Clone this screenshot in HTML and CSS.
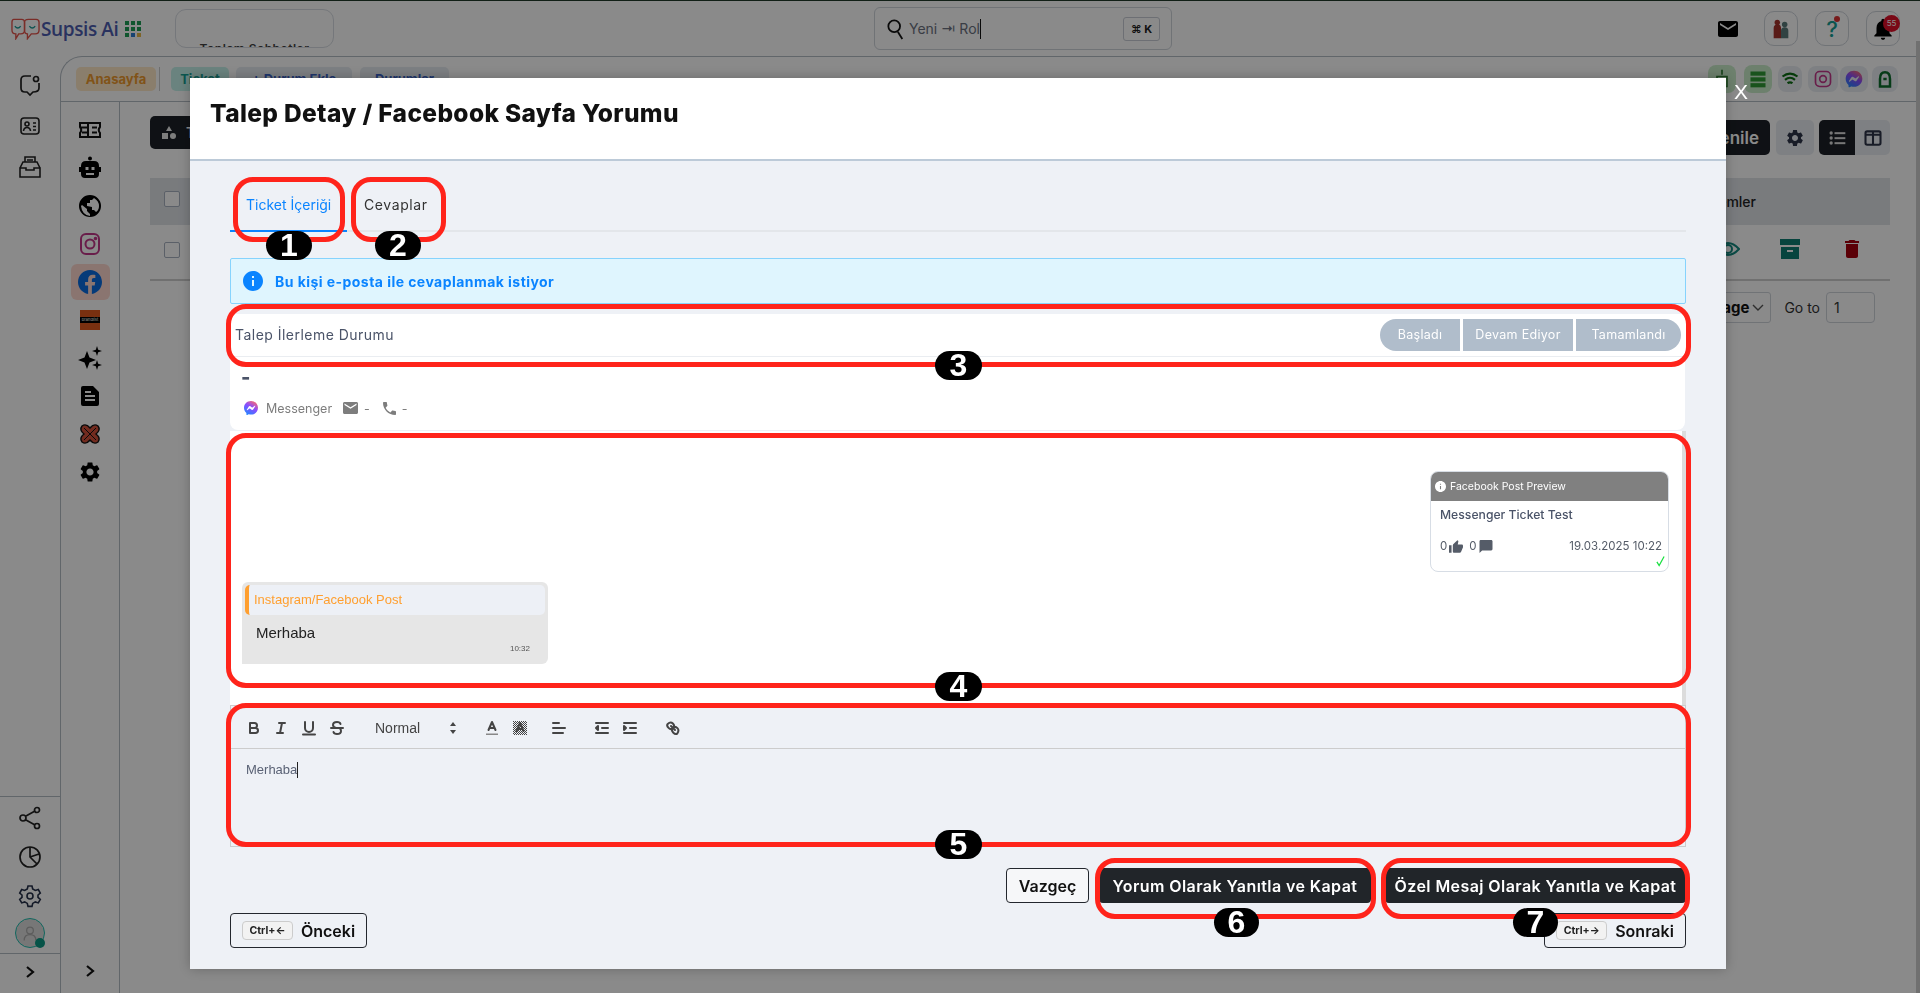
FILE: index.html
```html
<!DOCTYPE html>
<html lang="tr">
<head>
<meta charset="utf-8">
<title>Supsis Ai</title>
<link rel="stylesheet" href="styles.css">
</head>
<body>
<svg class="defs" width="0" height="0"><defs>
<linearGradient id="msg" x1="0.2" y1="1" x2="0.8" y2="0"><stop offset="0" stop-color="#1e88ff"/><stop offset="0.55" stop-color="#8a4dff"/><stop offset="1" stop-color="#ff6a6a"/></linearGradient>
<pattern id="dots" width="2" height="2" patternUnits="userSpaceOnUse"><rect width="1" height="1" fill="#444"/><rect x="1" y="1" width="1" height="1" fill="#444"/></pattern>
</defs></svg>
<div class="page">
  <div class="app">
    <header class="topbar">
      <div class="logo">
        <svg class="logo-mark" viewBox="0 0 30 22" fill="none" stroke="#e2534b" stroke-width="1.4"><path d="M3 1h8q3 0 3 3v8q0 4-4 4H8l-3 5v-5q-4 0-4-4V4q0-3 2-3z"/><path d="M18 1h8q3 0 3 3v8q0 4-4 4h-4l-4 5v-5q-3 0-3-4V4q0-3 4-3z"/><path d="M4 8q3 4 6 0M19 8q3 4 6 0" stroke="#1c9c96"/></svg>
        <span class="logo-text">Supsis Ai</span>
      </div>
      <svg class="apps" viewBox="0 0 16 16"><g fill="#1f9d55"><rect width="4" height="4"/><rect x="6" width="4" height="4"/><rect x="12" width="4" height="4"/><rect y="6" width="4" height="4"/><rect x="6" y="6" width="4" height="4"/><rect x="12" y="6" width="4" height="4"/><rect y="12" width="4" height="4"/></g><rect x="6" y="12" width="4" height="4" fill="#2d7dd2"/><rect x="12" y="12" width="4" height="4" fill="#e9b949"/></svg>
      <div class="stat-card"><span>Toplam Sohbetler</span></div>
      <div class="search">
        <svg class="search-icon" viewBox="0 0 20 24" fill="none" stroke="#111" stroke-width="2"><circle cx="8" cy="9" r="6.5"/><path d="M12 15l5 8"/></svg>
        <span class="search-text">Yeni ⇥ Rol</span><span class="caret"></span>
        <span class="search-kbd">⌘ K</span>
      </div>
      <div class="top-actions">
        <svg class="mail" viewBox="2 4 20 16"><path d="M20 4H4c-1.1 0-2 .9-2 2v12c0 1.1.9 2 2 2h16c1.1 0 2-.9 2-2V6c0-1.1-.9-2-2-2zm0 4l-8 5-8-5V6l8 5 8-5v2z"/></svg>
        <div class="top-btn"><svg class="ico22" viewBox="0 0 24 24"><path fill="#a5322c" d="M4 22V11q0-4 4-4t4 4v11z"/><circle cx="8" cy="5" r="3" fill="#a5322c"/><path fill="#5a7a7a" d="M12 22v-8q0-4 4-4t4 4v8z"/><circle cx="16" cy="7" r="3" fill="#5a7a7a"/></svg></div>
        <div class="top-btn top-help"><span class="help">?</span><span class="help-dot"></span></div>
        <div class="top-btn"><svg class="ico26" viewBox="0 0 24 24"><path d="M12 22c1.1 0 2-.9 2-2h-4c0 1.1.9 2 2 2zm6-6v-5c0-3.07-1.64-5.64-4.5-6.32V4c0-.83-.67-1.5-1.5-1.5s-1.5.67-1.5 1.5v.68C7.63 5.36 6 7.92 6 11v5l-2 2v1h16v-1l-2-2z"/></svg><span class="bell-badge">55</span></div>
      </div>
    </header>
    <div class="shell">
      <nav class="rail">
        <div class="rail-top">
          <svg class="rail-ico" viewBox="0 0 24 24" fill="none" stroke="#222" stroke-width="1.7"><path d="M13 3H7q-4 0-4 4v8q0 4 4 4h2l3 3 3-3q6 0 6-4v-5"/><circle cx="18" cy="6" r="2.5"/></svg>
          <svg class="rail-ico" viewBox="0 0 24 24" fill="none" stroke="#222" stroke-width="1.6"><rect x="3" y="4" width="18" height="16" rx="3"/><circle cx="9" cy="10" r="2"/><path d="M5.500 17q.5-3.500 3.500-3.500t3.500 3.500M15 9h3M15 12.500h3M15 16h3"/></svg>
          <svg class="rail-ico" viewBox="0 0 24 24" fill="none" stroke="#222" stroke-width="1.6"><path d="M2 13h6v2h8v-2h6v9H2zM2 13l3-6h14l3 6M7 7V2h10v5M9 5h6"/></svg>
        </div>
        <div class="rail-bottom">
          <svg class="rail-ico" viewBox="0 0 24 24" fill="none" stroke="#222" stroke-width="1.7"><circle cx="5" cy="12" r="3"/><circle cx="19" cy="4" r="2.500"/><circle cx="19" cy="20" r="2.500"/><path d="M8 10l9-5M8 14l9 5"/></svg>
          <svg class="rail-ico" viewBox="0 0 24 24" fill="none" stroke="#222" stroke-width="1.7"><circle cx="12" cy="12" r="10"/><path d="M12 2v10l7 7M12 12l9-3"/></svg>
          <svg class="rail-ico" viewBox="0 0 24 24" fill="none" stroke="#26304a" stroke-width="1.6"><path d="M10 2h4l.7 3 2.600 1.500 3-1 2 3.500-2.300 2v2.400l2.300 2-2 3.500-3-1-2.600 1.500-.7 3h-4l-.7-3-2.600-1.500-3 1-2-3.500 2.300-2v-2.400l-2.300-2 2-3.500 3 1L9.300 5z"/><circle cx="12" cy="12" r="3"/></svg>
          <div class="avatar"><svg viewBox="0 0 24 24" fill="none" stroke="#aaa" stroke-width="1.500"><circle cx="12" cy="9" r="4"/><path d="M5 21q0-7 7-7t7 7"/></svg><span class="avatar-dot"></span></div>
          <div class="rail-foot"><svg class="chev" viewBox="0 0 10 14" fill="none" stroke="#111" stroke-width="2.200"><path d="M2 2l6 5-6 5"/></svg></div>
        </div>
      </nav>
      <div class="panel">
        <div class="strip">
          <span class="chip chip-home">Anasayfa</span><span class="strip-sep"></span>
          <span class="chip chip-ticket">Ticket</span>
          <span class="chip chip-add">+ Durum Ekle</span>
          <span class="chip chip-status">Durumlar</span>
          <div class="strip-icons">
            <span class="sq sq-green"><svg viewBox="0 0 24 24" fill="none" stroke="#2f7d32" stroke-width="2"><path d="M12 1v6M6 9h12v12H6z"/></svg></span>
            <span class="sq sq-green sq-list"><svg viewBox="0 0 24 24" fill="#2f9a34"><rect x="3" y="3" width="18" height="5"/><rect x="3" y="10" width="18" height="5"/><rect x="3" y="17" width="18" height="5"/></svg></span>
            <span class="sq sq-wifi"><svg viewBox="0 0 24 24" fill="none" stroke="#0c6e14" stroke-width="2.600"><path d="M3 9q9-7 18 0M6 13q6-5 12 0M9 17q3-2 6 0"/></svg></span>
            <span class="sq sq-ig"><svg viewBox="0 0 24 24" fill="none" stroke="#c2378a" stroke-width="2"><rect x="3" y="3" width="18" height="18" rx="5"/><circle cx="12" cy="12" r="4"/></svg></span>
            <span class="sq sq-ms"><svg viewBox="0 0 24 24" fill="url(#msg)"><path fill-rule="evenodd" d="M12 2C6.360 2 2 6.130 2 11.700c0 2.910 1.190 5.440 3.140 7.170.16.14.26.35.27.57l.05 1.780c.02.57.6.94 1.120.71l1.980-.87c.17-.08.36-.09.53-.05.91.25 1.880.39 2.910.39 5.640 0 10-4.130 10-9.700S17.640 2 12 2zm6 7.460l-2.940 4.660c-.47.74-1.470.93-2.170.4l-2.340-1.750a.6.6 0 00-.72 0l-3.160 2.400c-.42.32-.97-.18-.69-.63l2.940-4.660c.47-.74 1.470-.93 2.170-.4l2.340 1.750c.21.16.51.16.72 0l3.160-2.400c.42-.32.97.18.69.63z"/></svg></span>
            <span class="sq sq-last"><svg viewBox="0 0 24 24" fill="none" stroke="#0c6e2c" stroke-width="3"><path d="M6 21v-9q0-8 6-8t6 8v9zM10 12h4"/></svg></span>
          </div>
        </div>
        <div class="work">
          <aside class="subrail">
            <svg class="sub-ico" viewBox="0 0 24 24" fill="none" stroke="#111" stroke-width="2"><path d="M2 5h20v4q-2.500 3 0 6v4H2v-4q2.500-3 0-6zM2 9.500h8M4 14.500h6M10 5v14M14 9.500h5M14 14.500h5"/></svg>
            <svg class="sub-ico" viewBox="0 0 24 24"><circle cx="12" cy="2.500" r="2"/><path fill-rule="evenodd" d="M8 5h8q5 0 5 5v1h2v5h-2v2q0 4-4 4H7q-4 0-4-4v-2H1v-5h2v-1q0-5 5-5zm-.5 6v3h3v-3zm6 0v3h3v-3zM8 17v2h8v-2z"/></svg>
            <svg class="sub-ico" viewBox="0 0 24 24"><path fill-rule="evenodd" d="M12 1a11 11 0 100 22 11 11 0 000-22zM4 11l5 4v2l3 3v2Q4 21 3 12zm14 7l-2-2h-2v-3l-5-1V9h3V6h2l2-2q5 3 5 8 0 4-3 6z"/></svg>
            <svg class="sub-ico ig" viewBox="0 0 24 24" fill="none" stroke="#c2378a" stroke-width="2"><rect x="3" y="2" width="18" height="20" rx="5"/><circle cx="12" cy="12" r="4.500"/><circle cx="17.500" cy="6.500" r=".8" fill="#c2378a"/></svg>
            <div class="sub-active"><svg class="sub-ico" viewBox="0 0 24 24"><path fill="#0b6ce0" d="M24 12.070C24 5.410 18.630 0 12 0S0 5.410 0 12.070c0 6.020 4.390 11.010 10.130 11.930v-8.440H7.080v-3.490h3.050V9.410c0-3.020 1.790-4.690 4.530-4.690 1.310 0 2.680.24 2.680.24v2.970h-1.510c-1.490 0-1.960.93-1.960 1.870v2.260h3.330l-.53 3.490h-2.800V24C19.610 23.080 24 18.090 24 12.070z"/></svg></div>
            <div class="brand"><span>brandlist</span></div>
            <svg class="sub-ico" viewBox="0 0 24 24"><path d="M9 5l2.500 6.500L18 14l-6.500 2.500L9 23l-2.500-6.500L0 14l6.500-2.500zM19 0l1.200 3.800L24 5l-3.800 1.200L19 10l-1.200-3.800L14 5l3.800-1.200zM19 14l1.200 3.800L24 19l-3.800 1.200L19 24l-1.200-3.800L14 19l3.800-1.200z"/></svg>
            <svg class="sub-ico" viewBox="0 0 24 24"><path fill-rule="evenodd" d="M5 2h10l6 6v12q0 2-2 2H5q-2 0-2-2V4q0-2 2-2zm2 9v2h10v-2zm0 4v2h10v-2zm0-8v2h6V7z"/></svg>
            <svg class="sub-ico" viewBox="0 0 24 24" fill="none" stroke-width="1.400"><path fill="#d2503a" stroke="#111" d="M4 4q4-3 8 2 4-5 8-2 3 4-2 8 5 4 2 8-4 3-8-2-4 5-8 2-3-4 2-8-5-4-2-8z"/><path stroke="#111" d="M6 18L18 6M6 6l12 12" stroke-width="1"/></svg>
            <svg class="sub-ico" viewBox="0 0 24 24"><path d="M19.140 12.940c.04-.3.06-.61.06-.94 0-.32-.02-.64-.07-.94l2.030-1.580c.18-.14.23-.41.12-.61l-1.920-3.320c-.12-.22-.37-.29-.59-.22l-2.390.96c-.5-.38-1.030-.7-1.620-.94l-.36-2.540c-.04-.24-.24-.41-.48-.41h-3.840c-.24 0-.43.17-.47.41l-.36 2.540c-.59.24-1.130.57-1.620.94l-2.390-.96c-.22-.08-.47 0-.59.22L2.740 8.870c-.12.21-.08.47.12.61l2.030 1.580c-.05.3-.09.63-.09.94s.02.64.07.94l-2.030 1.580c-.18.14-.23.41-.12.61l1.920 3.320c.12.22.37.29.59.22l2.390-.96c.5.38 1.030.7 1.620.94l.36 2.540c.05.24.24.41.48.41h3.840c.24 0 .44-.17.47-.41l.36-2.540c.59-.24 1.130-.56 1.620-.94l2.390.96c.22.08.47 0 .59-.22l1.920-3.320c.12-.22.07-.47-.12-.61l-2.010-1.580zM12 15.600c-1.980 0-3.600-1.620-3.600-3.600s1.620-3.600 3.600-3.600 3.600 1.620 3.600 3.600-1.620 3.600-3.600 3.600z"/></svg>
            <div class="subrail-foot"><svg class="chev" viewBox="0 0 10 14" fill="none" stroke="#111" stroke-width="2.200"><path d="M2 2l6 5-6 5"/></svg></div>
          </aside>
          <main class="main">
            <div class="toolbar">
              <button class="btn-dark btn-left"><svg viewBox="0 0 14 14" fill="#e8e8e8"><path d="M7 0l3 5H4z"/><rect x="0" y="7" width="6" height="6"/><circle cx="11" cy="10" r="3"/></svg><span>Toplu İşlem</span></button>
              <div class="toolbar-right">
                <button class="btn-dark btn-refresh">Yenile</button>
                <span class="tool-sq"><svg viewBox="0 0 24 24" fill="#2e3448"><path d="M19.140 12.940c.04-.3.06-.61.06-.94 0-.32-.02-.64-.07-.94l2.030-1.580c.18-.14.23-.41.12-.61l-1.920-3.320c-.12-.22-.37-.29-.59-.22l-2.390.96c-.5-.38-1.030-.7-1.620-.94l-.36-2.540c-.04-.24-.24-.41-.48-.41h-3.840c-.24 0-.43.17-.47.41l-.36 2.540c-.59.24-1.130.57-1.620.94l-2.390-.96c-.22-.08-.47 0-.59.22L2.740 8.870c-.12.21-.08.47.12.61l2.030 1.580c-.05.3-.09.63-.09.94s.02.64.07.94l-2.030 1.580c-.18.14-.23.41-.12.61l1.920 3.320c.12.22.37.29.59.22l2.390-.96c.5.38 1.030.7 1.620.94l.36 2.540c.05.24.24.41.48.41h3.840c.24 0 .44-.17.47-.41l.36-2.540c.59-.24 1.130-.56 1.620-.94l2.390.96c.22.08.47 0 .59-.22l1.920-3.320c.12-.22.07-.47-.12-.61l-2.010-1.580zM12 15.600c-1.980 0-3.600-1.620-3.600-3.600s1.620-3.600 3.600-3.600 3.600 1.620 3.600 3.600-1.620 3.600-3.600 3.600z"/></svg></span>
                <div class="view-toggle">
                  <span class="view-on"><svg viewBox="0 0 24 24" fill="#ddd"><circle cx="5" cy="6" r="2"/><circle cx="5" cy="12" r="2"/><circle cx="5" cy="18" r="2"/><rect x="9" y="5" width="13" height="2.400"/><rect x="9" y="11" width="13" height="2.400"/><rect x="9" y="17" width="13" height="2.400"/></svg></span>
                  <span class="view-off"><svg viewBox="0 0 24 24" fill="none" stroke="#2e3448" stroke-width="2.500"><rect x="3" y="4" width="18" height="16" rx="2"/><path d="M12 4v16M3 8h18"/></svg></span>
                </div>
              </div>
            </div>
            <div class="table">
              <div class="t-head"><span class="check"></span><span class="t-actions-title">İşlemler</span></div>
              <div class="t-row"><span class="check"></span>
                <div class="t-actions">
                  <svg class="act" viewBox="0 0 24 24" fill="none" stroke="#138a80" stroke-width="2"><path d="M1 12q11-12 22 0-11 12-22 0z"/><circle cx="12" cy="12" r="4"/></svg>
                  <svg class="act" viewBox="0 0 24 24" fill="#0d7f73"><path fill-rule="evenodd" d="M2 2h20v6H2zm1 8h18v12H3zm6 3v2h6v-2z"/></svg>
                  <svg class="act" viewBox="0 0 24 24" fill="#a8000e"><path d="M6 19c0 1.100.9 2 2 2h8c1.100 0 2-.9 2-2V7H6v12zM19 4h-3.500l-1-1h-5l-1 1H5v2h14V4z"/></svg>
                </div>
              </div>
            </div>
            <div class="pager"><span class="pager-select">10 / page<svg viewBox="0 0 12 8" fill="none" stroke="#555" stroke-width="1.400"><path d="M1 1l5 5 5-5"/></svg></span><span class="pager-go">Go to</span><span class="pager-input">1</span></div>
          </main>
        </div>
      </div>
    </div>
  </div>
  <div class="pagebar"></div>
</div>

<div class="overlay"></div>

<section class="modal">
  <header class="modal-head"><h1>Talep Detay / Facebook Sayfa Yorumu</h1></header>
  <div class="modal-body">
    <div class="tabs"><span class="tab tab-on">Ticket İçeriği</span><span class="tab tab-two">Cevaplar</span></div>
    <div class="alert">
      <svg viewBox="2 2 20 20" fill="#0a84ff"><path d="M12 2C6.480 2 2 6.480 2 12s4.480 10 10 10 10-4.480 10-10S17.520 2 12 2zm1 15h-2v-6h2v6zm0-8h-2V7h2v2z"/></svg>
      <span>Bu kişi e-posta ile cevaplanmak istiyor</span>
    </div>
    <div class="progress">
      <span class="progress-label">Talep İlerleme Durumu</span>
      <div class="steps"><span class="step step-a">Başladı</span><span class="step step-b">Devam Ediyor</span><span class="step step-c">Tamamlandı</span></div>
    </div>
    <div class="contact">
      <div class="contact-name">-</div>
      <div class="contact-meta">
        <svg class="c-msg" viewBox="2 2 20 20" fill="url(#msg)"><path fill-rule="evenodd" d="M12 2C6.360 2 2 6.130 2 11.700c0 2.910 1.190 5.440 3.140 7.170.16.14.26.35.27.57l.05 1.780c.02.57.6.94 1.120.71l1.980-.87c.17-.08.36-.09.53-.05.91.25 1.880.39 2.910.39 5.640 0 10-4.130 10-9.700S17.640 2 12 2zm6 7.460l-2.940 4.660c-.47.74-1.470.93-2.170.4l-2.340-1.750a.6.6 0 00-.72 0l-3.160 2.400c-.42.32-.97-.18-.69-.63l2.940-4.660c.47-.74 1.470-.93 2.170-.4l2.340 1.750c.21.16.51.16.72 0l3.160-2.400c.42-.32.97.18.69.63z"/></svg>
        <span class="c-name">Messenger</span>
        <svg class="c-mail" viewBox="2 4 20 16" fill="#7d7d7d"><path d="M20 4H4c-1.100 0-2 .9-2 2v12c0 1.100.9 2 2 2h16c1.100 0 2-.9 2-2V6c0-1.100-.9-2-2-2zm0 4l-8 5-8-5V6l8 5 8-5v2z"/></svg>
        <span class="c-dash">-</span>
        <svg class="c-phone" viewBox="3 3 18 18" fill="#7d7d7d"><path d="M6.620 10.790c1.440 2.830 3.760 5.140 6.590 6.590l2.200-2.200c.27-.27.67-.36 1.020-.24 1.120.37 2.330.57 3.570.57.55 0 1 .45 1 1V20c0 .55-.45 1-1 1-9.390 0-17-7.610-17-17 0-.55.45-1 1-1h3.500c.55 0 1 .45 1 1 0 1.250.2 2.450.57 3.570.11.35.03.74-.25 1.020l-2.200 2.200z"/></svg>
        <span class="c-dash">-</span>
      </div>
    </div>
    <div class="chat">
      <article class="post">
        <div class="post-head"><svg viewBox="2 2 20 20" fill="#fff"><path d="M12 2C6.480 2 2 6.480 2 12s4.480 10 10 10 10-4.480 10-10S17.520 2 12 2zm1 15h-2v-6h2v6zm0-8h-2V7h2v2z"/></svg><span>Facebook Post Preview</span></div>
        <div class="post-title">Messenger Ticket Test</div>
        <div class="post-foot">
          <span class="post-count">0</span><svg viewBox="1 1 22 20" fill="#555c68"><path d="M1 21h4V9H1v12zm22-11c0-1.100-.9-2-2-2h-6.310l.95-4.570.03-.32c0-.41-.17-.79-.44-1.060L14.170 1 7.590 7.590C7.220 7.950 7 8.450 7 9v10c0 1.100.9 2 2 2h9c.83 0 1.540-.5 1.840-1.220l3.020-7.050c.09-.23.14-.47.14-.73v-2z"/></svg>
          <span class="post-count post-count-2">0</span><svg viewBox="2 2 20 20" fill="#555c68"><path d="M20 2H4c-1.100 0-2 .9-2 2v18l4-4h14c1.100 0 2-.9 2-2V4c0-1.100-.9-2-2-2z"/></svg>
          <span class="post-date">19.03.2025 10:22</span>
          <svg class="post-check" viewBox="0 0 10 12" fill="none" stroke="#18e040" stroke-width="1.400"><path d="M1 7l2.500 4L9 1"/></svg>
        </div>
      </article>
      <article class="bubble">
        <div class="quote">Instagram/Facebook Post</div>
        <div class="bubble-text">Merhaba</div>
        <div class="bubble-time">10:32</div>
      </article>
    </div>
    <div class="editor">
      <div class="ql-bar">
        <svg class="q q-b" viewBox="0 0 18 18"><path d="M5 4h4.500a2.500 2.500 0 010 5H5zM5 9h5.500a2.500 2.500 0 010 5H5z"/></svg>
        <svg class="q q-i" viewBox="0 0 18 18"><path d="M7 4h6M5 14h6M8 14l2-10"/></svg>
        <svg class="q q-u" viewBox="0 0 18 18"><path d="M5 3v6a4 4 0 008 0V3M3 15.500h12"/></svg>
        <svg class="q q-s" viewBox="0 0 18 18"><path d="M3 9h12M12.500 5q-.5-2-3.500-2-4 0-4 3 0 2 3 3M5.500 13q.5 2 3.500 2 4 0 4-3 0-1.500-1-2.500"/></svg>
        <span class="q-font">Normal</span>
        <svg class="q-arrows" viewBox="0 0 8 14" fill="#444"><path d="M4 1l3 4H1zM4 13l3-4H1z"/></svg>
        <svg class="q q-color" viewBox="0 0 18 18"><path d="M5.500 11L9 3l3.500 8M6.400 9h5.200"/><rect x="3" y="14.500" width="12" height="1.500" fill="#888" stroke="none"/></svg>
        <svg class="q q-bg" viewBox="0 0 18 18"><rect x="2" y="2" width="14" height="14" fill="url(#dots)" stroke="none"/><path d="M5.500 12L9 4l3.500 8M6.400 10h5.200"/></svg>
        <svg class="q q-align" viewBox="0 0 18 18"><path d="M3 4h6M3 9h12M3 14h10"/></svg>
        <svg class="q q-out" viewBox="0 0 18 18"><path d="M3 4h12M3 14h12M9 9h6"/><path d="M5 7v4L3 9z" fill="#444"/></svg>
        <svg class="q q-in" viewBox="0 0 18 18"><path d="M3 4h12M3 14h12M9 9h6"/><path d="M3 7v4l2-2z" fill="#444"/></svg>
        <svg class="q q-link" viewBox="0 0 18 18"><path d="M7 7l4 4M8.900 4.577a3.476 3.476 0 01.36 4.679A3.476 3.476 0 014.577 8.900C3.185 7.500 2.350 6.458 3.683 4.900 5.500 3.300 7.350 3.100 8.900 4.577zM13.423 9.100a3.476 3.476 0 00-4.679-.36 3.476 3.476 0 00.36 4.679c1.392 1.392 2.500 2.208 4.100 1.167C14.700 12.500 14.900 10.650 13.423 9.100z"/></svg>
      </div>
      <div class="ql-text">Merhaba<span class="ql-caret"></span></div>
    </div>
    <div class="actions">
      <button class="btn-line btn-cancel">Vazgeç</button>
      <button class="btn-solid btn-comment">Yorum Olarak Yanıtla ve Kapat</button>
      <button class="btn-solid btn-private">Özel Mesaj Olarak Yanıtla ve Kapat</button>
    </div>
    <div class="nav-row">
      <button class="btn-line btn-prev"><kbd>Ctrl+←</kbd>Önceki</button>
      <button class="btn-line btn-next"><kbd>Ctrl+→</kbd>Sonraki</button>
    </div>
  </div>
</section>
<span class="modal-close">X</span>

<div class="notes">
  <span class="box box-1"></span><span class="box box-2"></span><span class="box box-3"></span><span class="box box-4"></span><span class="box box-5"></span><span class="box box-6"></span><span class="box box-7"></span>
  <span class="pill pill-1">1</span><span class="pill pill-2">2</span><span class="pill pill-3">3</span><span class="pill pill-4">4</span><span class="pill pill-5">5</span><span class="pill pill-6">6</span><span class="pill pill-7">7</span>
</div>
</body>
</html>
```
FILE: styles.css
```css
* { box-sizing: border-box; }
html, body { margin: 0; height: 100%; overflow: hidden; }
body { font-family: Inter, "Noto Sans", "Liberation Sans", sans-serif; color: #222; background: #fff; }
button { font: inherit; cursor: pointer; }
.defs { position: absolute; }

.page { display: flex; height: 993px; border-top: 1px solid #203a2a; }
.app { flex: 1; display: flex; flex-direction: column; min-width: 0; }
.pagebar { width: 4px; background: linear-gradient(#ffffff 0, #ffffff 40px, #cfcfcf 40px); }

/* top bar */
.topbar { height: 55px; display: flex; align-items: center; padding-left: 11px; flex: none; }
.logo { display: flex; align-items: center; gap: 1px; width: 114px; }
.logo-mark { width: 29px; height: 22px; flex: none; }
.logo-text { font-size: 19px; font-weight: 600; color: #4d5db0; letter-spacing: -.4px; white-space: nowrap; font-family: "Open Sans", sans-serif; }
.apps { width: 16px; height: 16px; }
.stat-card { width: 159px; height: 39px; margin-left: 34px; border: 1px solid #d8dce3; border-radius: 11px; overflow: hidden; text-align: center; padding-top: 31px; font-size: 12px; font-weight: 600; color: #444; letter-spacing: .5px; }
.search { width: 298px; height: 43px; margin-left: 540px; border: 1px solid #cfd4db; border-radius: 6px; display: flex; align-items: center; padding-left: 12px; }
.search-icon { width: 18px; height: 22px; }
.search-text { margin-left: 4px; font-size: 14px; color: #6b7280; }
.caret { width: 1px; height: 20px; background: #111; margin-left: 0; }
.search-kbd { margin-left: auto; margin-right: 11px; width: 37px; height: 24px; border: 1px solid #c9ced6; border-radius: 3px; font-size: 11px; font-weight: 700; color: #222; display: flex; align-items: center; justify-content: center; }
.top-actions { margin-left: auto; padding-right: 16px; display: flex; align-items: center; gap: 17px; }
.mail { width: 20px; height: 16px; margin-right: 9px; fill: #000; }
.top-btn { position: relative; width: 34px; height: 35px; border: 1px solid #cfd4db; border-radius: 10px; display: flex; align-items: center; justify-content: center; }
.ico22 { width: 22px; height: 24px; }
.ico26 { width: 26px; height: 26px; }
.help { font-size: 22px; font-weight: 500; color: #159e92; }
.help-dot { position: absolute; top: 4px; right: 8px; width: 6px; height: 6px; border-radius: 50%; background: #d33; }
.bell-badge { position: absolute; top: 3px; right: -1px; width: 17px; height: 17px; border-radius: 50%; background: #e0102a; color: #fff; font-size: 8px; text-align: center; line-height: 17px; }

/* shell */
.shell { flex: 1; display: flex; min-height: 0; }
.rail { width: 60px; flex: none; display: flex; flex-direction: column; justify-content: space-between; }
.rail-top { display: flex; flex-direction: column; align-items: center; gap: 17px; padding-top: 17px; }
.rail-ico { width: 24px; height: 24px; flex: none; }
.rail-bottom { display: flex; flex-direction: column; align-items: center; gap: 15px; border-top: 1px solid #b4bcc4; padding-top: 9px; }
.avatar { position: relative; width: 30px; height: 30px; border-radius: 50%; border: 1px solid #1fbfb0; background: #ddd; padding: 4px; margin: -5px 0 -10px; flex: none; }
.avatar svg { display: block; }
.avatar-dot { position: absolute; right: -1px; bottom: -1px; width: 10px; height: 10px; border-radius: 50%; background: #0c9a85; }
.rail-foot { width: 100%; height: 40px; border-top: 1px solid #b4bcc4; display: flex; justify-content: center; padding-top: 11px; }
.chev { width: 10px; height: 14px; }

.panel { flex: 1; min-width: 0; display: flex; flex-direction: column; border-left: 1px solid #b4bcc4; border-top: 1px solid #b4bcc4; border-top-left-radius: 22px; }
.strip { height: 45px; flex: none; display: flex; align-items: center; padding-left: 15px; border-bottom: 1px solid #b4bcc4; font-size: 13px; font-weight: 700; }
.chip { height: 24px; border-radius: 5px; display: flex; align-items: center; justify-content: center; }
.chip-home { width: 80px; background: #ffe9c8; color: #ee9a2e; }
.strip-sep { width: 1px; height: 24px; background: #ccc; margin: 0 11px 0 3px; }
.chip-ticket { width: 58px; background: #c5f2ea; color: #159e92; margin-right: 7px; }
.chip-add { width: 116px; background: #e7ecf2; color: #3a63c8; margin-right: 8px; }
.chip-status { width: 89px; background: #e7ecf2; color: #3a63c8; }
.strip-icons { margin-left: auto; display: flex; align-items: center; padding-right: 18px; }
.sq { width: 28px; height: 26px; border-radius: 8px; background: #e9edf2; display: flex; align-items: center; justify-content: center; }
.sq svg { width: 20px; height: 20px; }
.sq-green { background: #c9ecc9; height: 28px; }
.sq-list { margin-left: 8px; }
.sq-wifi { width: 24px; margin-left: 6px; }
.sq-ig { width: 30px; margin-left: 6px; }
.sq-ms { margin-left: 2px; }
.sq-last { width: 26px; margin-left: 4px; }

.work { flex: 1; display: flex; min-height: 0; }
.subrail { width: 59px; flex: none; border-right: 1px solid #b4bcc4; display: flex; flex-direction: column; align-items: center; gap: 14px; padding-top: 16px; }
.sub-ico { width: 24px; height: 24px; flex: none; }
.sub-active { width: 39px; height: 36px; margin: -6px 0; border-radius: 6px; background: #ffd9d0; display: flex; align-items: center; justify-content: center; flex: none; }
.brand { width: 20px; height: 20px; background: #e05a1f; display: flex; align-items: center; flex: none; margin: 2px 0; }
.brand span { display: block; width: 100%; background: #000; color: #fff; font-size: 4px; line-height: 6px; text-align: center; overflow: hidden; }
.subrail-foot { margin-top: auto; width: 100%; height: 40px; display: flex; justify-content: center; padding-top: 11px; }

.main { flex: 1; min-width: 0; padding: 14px 26px 0 30px; }
.toolbar { display: flex; justify-content: space-between; height: 39px; }
.btn-dark { height: 35px; border: 0; border-radius: 5px; background: #1c2127; color: #fff; font-weight: 600; font-size: 16px; }
.btn-left { width: 160px; font-size: 14px; height: 33px; display: flex; align-items: center; gap: 10px; padding: 0 0 0 12px; }
.btn-left svg { width: 14px; height: 14px; flex: none; }
.toolbar-right { display: flex; gap: 6px; margin-top: 4px; }
.btn-refresh { width: 110px; text-align: right; padding-right: 11px; font-size: 17px; }
.tool-sq { width: 38px; height: 35px; border-radius: 5px; background: #e9edf2; display: flex; align-items: center; justify-content: center; }
.tool-sq svg { width: 20px; height: 20px; }
.view-toggle { display: flex; border-radius: 5px; overflow: hidden; margin-left: -1px; height: 35px; }
.view-on, .view-off { width: 36px; height: 35px; display: flex; align-items: center; justify-content: center; }
.view-on { background: #1c2127; }
.view-off { background: #e9edf2; width: 35px; }
.view-on svg, .view-off svg { width: 20px; height: 20px; }

.table { margin-top: 23px; box-shadow: 0 2px 0 #cfcfcf; }
.t-head { height: 47px; background: #dfe3e8; display: flex; align-items: center; padding-left: 14px; font-size: 14px; font-weight: 500; color: #222; }
.t-row { height: 54px; background: #fff; display: flex; align-items: center; padding-left: 14px; }
.check { width: 16px; height: 16px; border: 1.500px solid #a8b2c0; border-radius: 2px; background: #fff; margin-top: -5px; }
.t-actions-title { margin-left: auto; margin-right: 134px; }
.t-actions { margin-left: auto; display: flex; gap: 38px; padding-right: 26px; margin-top: -6px; }
.act { width: 24px; height: 24px; }
.pager { margin-top: 13px; display: flex; justify-content: flex-end; align-items: center; padding-right: 15px; font-size: 14px; }
.pager-select { width: 120px; height: 31px; border: 1px solid #cfd4db; border-radius: 3px; display: flex; align-items: center; justify-content: flex-end; gap: 3px; padding-right: 6px; font-weight: 700; color: #111; font-size: 15px; }
.pager-select svg { width: 12px; height: 8px; }
.pager-go { margin-left: 13px; color: #333; }
.pager-input { width: 49px; height: 31px; margin-left: 6px; border: 1px solid #cfd4db; border-radius: 4px; padding-left: 7px; line-height: 29px; color: #333; }

/* overlay and modal */
.overlay { position: fixed; inset: 0; background: rgba(0, 0, 0, .46); }
.modal { position: fixed; left: 190px; top: 78px; width: 1536px; height: 891px; background: #eef1f6; display: flex; flex-direction: column; box-shadow: 0 0 12px rgba(0, 0, 0, .25); }
.modal-head { height: 83px; flex: none; background: #fff; border-bottom: 2px solid #bccad8; padding: 0 20px; display: flex; align-items: center; }
.modal-head h1 { margin: 0 0 11px; font-size: 24.500px; line-height: 32px; font-weight: 800; color: #111; letter-spacing: .35px; }
.modal-close { position: fixed; left: 1734px; top: 80px; color: #fff; font: 400 21px/24px "Liberation Sans", sans-serif; }
.modal-body { flex: 1; min-height: 0; padding: 0 40px; display: flex; flex-direction: column; }

.tabs { height: 71px; flex: none; border-bottom: 2px solid #e3e6ea; display: flex; }
.tab { height: 71px; padding: 32px 16px 0; font-size: 14px; line-height: 24px; color: #333; white-space: nowrap; border-bottom: 2px solid transparent; }
.tab-two { letter-spacing: .6px; padding-left: 17px; }
.tab-on { color: #0a84ff; border-bottom-color: #0a84ff; width: 117px; }
.alert { margin-top: 26px; height: 46px; flex: none; border: 1px solid #86d3fd; border-radius: 2px; background: #dff5fe; display: flex; align-items: center; padding-left: 12px; gap: 12px; font-size: 14px; font-weight: 700; color: #0a84ff; letter-spacing: .45px; }
.alert svg { width: 20px; height: 20px; }
.progress { margin-top: 10px; height: 43px; flex: none; background: #fff; border-bottom: 1px solid #eaedf1; display: flex; align-items: center; justify-content: space-between; padding: 0 5px; }
.progress-label { font-size: 14px; color: #4a5368; letter-spacing: .47px; margin-top: -2px; }
.steps { display: flex; gap: 3px; margin-top: -1px; }
.step { height: 32px; background: #b0bdcb; color: #fff; font-size: 12.500px; letter-spacing: .3px; display: flex; align-items: center; justify-content: center; }
.step-a { width: 80px; border-radius: 16px 0 0 16px; }
.step-b { width: 110px; }
.step-c { width: 105px; border-radius: 0 16px 16px 0; }
.contact { height: 73px; flex: none; background: #fff; border-radius: 0 0 8px 8px; margin-right: 1px; padding: 11px 11px 0; }
.contact-name { height: 19px; font-size: 20px; line-height: 19px; font-weight: 800; color: #4a5368; }
.contact-meta { margin-top: 11px; display: flex; align-items: center; font-size: 12.500px; color: #7d7d7d; height: 20px; padding-left: 3px; }
.c-msg { width: 14px; height: 14px; }
.c-name { margin-left: 8px; width: 66px; }
.c-mail { width: 15px; height: 12px; margin-left: 11px; }
.c-dash { margin-left: 6px; }
.c-phone { width: 13px; height: 13px; margin-left: 13px; }

.chat { margin-top: 1px; height: 274px; flex: none; background: #fff; border-right: 4px solid #dcdcdc; padding: 40px 13px 0 12px; display: flex; flex-direction: column; }
.post { width: 239px; height: 101px; flex: none; align-self: flex-end; border: 1px solid #d7dde5; border-radius: 8px; overflow: hidden; position: relative; }
.post-head { height: 30px; background: #808080; color: #fff; font-size: 10.500px; display: flex; align-items: center; padding-left: 5px; gap: 4px; margin: -1px -1px 0; }
.post-head svg { width: 11px; height: 11px; }
.post-title { margin: 6px 0 0 9px; font-size: 12.200px; line-height: 16px; font-weight: 500; color: #4a5368; }
.post-foot { margin-top: 15px; padding: 0 6px 0 9px; display: flex; align-items: center; font-size: 11.500px; color: #555c68; height: 16px; }
.post-foot svg { width: 14px; height: 13px; margin-left: 2px; }
.post-count-2 { margin-left: 6px; }
.post-date { margin-left: auto; }
.post-foot .post-check { position: absolute; right: 3px; bottom: 4px; width: 9px; height: 12px; margin: 0; }
.bubble { margin-top: 10px; width: 306px; height: 82px; flex: none; background: #e6e6e6; border-radius: 6px 6px 6px 0; padding: 3px; font-family: "Liberation Sans", sans-serif; }
.quote { height: 30px; background: #edf0f6; border-left: 4px solid #ff9f2f; border-radius: 5px; padding-left: 5px; font-size: 13px; line-height: 29px; color: #ff9f2f; }
.bubble-text { margin: 8px 0 0 11px; font-size: 15px; line-height: 20px; color: #222; }
.bubble-time { margin: 1px 15px 0 0; text-align: right; font-size: 8px; line-height: 10px; color: #555; }

.editor { height: 142px; flex: none; border: 1px solid #cccccc; }
.ql-bar { height: 43px; border-bottom: 1px solid #ccc; display: flex; align-items: center; padding: 2px 0 0 14px; }
.q { width: 18px; height: 18px; flex: none; fill: none; stroke: #444; stroke-width: 2; stroke-linecap: round; stroke-linejoin: round; }
.q-b { margin-right: 9px; }
.q-i, .q-u { margin-right: 10px; }
.q-font { margin-left: 29px; font: 14px "Liberation Sans", sans-serif; color: #444; width: 46px; }
.q-arrows { width: 8px; height: 14px; margin-left: 28px; }
.q-color { margin-left: 26px; }
.q-bg { margin-left: 10px; }
.q-align { margin-left: 21px; }
.q-out { margin-left: 25px; }
.q-in { margin-left: 10px; }
.q-link { margin-left: 25px; }
.ql-text { padding: 12px 15px; font: 13px/18px "Liberation Sans", sans-serif; color: #5a6275; display: flex; align-items: center; }
.ql-caret { width: 1px; height: 16px; background: #222; }

.actions { margin-top: 21px; display: flex; justify-content: flex-end; height: 35px; flex: none; }
.btn-line { height: 35px; background: transparent; border: 1px solid #23272e; border-radius: 4px; color: #111; font-weight: 600; font-size: 16px; padding: 0; }
.btn-cancel { width: 83px; background: #f6f7f9; margin-right: 10px; }
.btn-solid { height: 35px; border: 0; border-radius: 4px; background: #212529; color: #fff; font-weight: 600; font-size: 16px; letter-spacing: .42px; padding: 0; white-space: nowrap; }
.btn-comment { width: 272px; margin-right: 14px; }
.btn-private { width: 301px; }
.nav-row { margin-top: 10px; display: flex; justify-content: space-between; flex: none; }
.btn-prev, .btn-next { display: flex; align-items: center; justify-content: center; gap: 8px; font-size: 16px; }
.btn-prev { width: 137px; }
.btn-next { width: 142px; }
kbd { width: 51px; height: 19px; border: 1px solid #ccc; border-radius: 4px; background: #f2f2f2; font: 700 10.500px/17px Inter, sans-serif; text-align: center; color: #222; }

/* annotation marks */
.notes { position: fixed; inset: 0; pointer-events: none; }
.box { position: absolute; border: 5px solid #ff241b; border-radius: 20px; }
.box-1 { left: 233px; top: 177px; width: 112px; height: 65px; }
.box-2 { left: 351px; top: 177px; width: 95px; height: 65px; }
.box-3 { left: 226px; top: 304px; width: 1465px; height: 63px; }
.box-4 { left: 226px; top: 433px; width: 1465px; height: 255px; }
.box-5 { left: 226px; top: 703px; width: 1465px; height: 144px; }
.box-6 { left: 1095px; top: 858px; width: 281px; height: 61px; }
.box-7 { left: 1381px; top: 858px; width: 309px; height: 61px; }
.pill { position: absolute; height: 29px; background: #000; color: #fff; border-radius: 15px; font: 700 32px/29px "Liberation Sans", sans-serif; text-align: center; }
.pill-1 { left: 266px; top: 231px; width: 46px; }
.pill-2 { left: 375px; top: 231px; width: 46px; }
.pill-3 { left: 935px; top: 351px; width: 47px; }
.pill-4 { left: 935px; top: 672px; width: 47px; }
.pill-5 { left: 935px; top: 830px; width: 47px; }
.pill-6 { left: 1214px; top: 908px; width: 45px; }
.pill-7 { left: 1513px; top: 908px; width: 45px; }
```
